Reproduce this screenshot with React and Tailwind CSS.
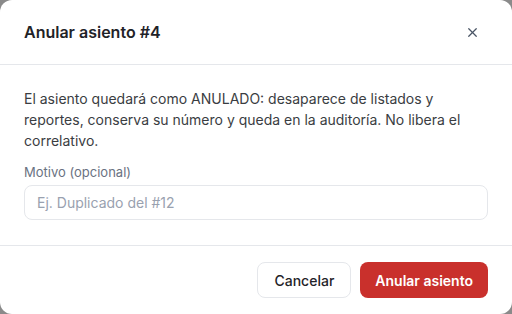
import { X } from "lucide-react";

export default function App() {
  return (
    <div
      className="min-h-[314px] w-full bg-[#8a8a8a]"
      style={{ fontFamily: "Inter, 'Noto Sans', sans-serif" }}
    >
      <div className="flex h-[314px] w-full flex-col rounded-xl bg-white">
        <div className="flex h-[65px] shrink-0 items-center justify-between border-b border-gray-200 px-6">
          <h2 className="text-[16px] font-semibold text-[#1f2328]">
            Anular asiento #4
          </h2>
          <button className="flex h-8 w-8 items-center justify-center text-gray-600">
            <X size={15} strokeWidth={2} />
          </button>
        </div>

        <div className="flex flex-col px-6 pt-[23px] pb-[25px]">
          <p className="text-[14px] leading-[21px] text-[#3a3d42]">
            El asiento quedará como ANULADO: desaparece de listados y
            reportes, conserva su número y queda en la auditoría. No libera el
            correlativo.
          </p>
          <label className="mt-[12px] text-[13px] leading-[18px] text-gray-500">
            Motivo (opcional)
          </label>
          <input
            className="mt-[4px] h-[35px] w-full rounded-lg border border-gray-200 px-3 text-[14px] text-gray-800 outline-none placeholder:text-gray-400"
            placeholder="Ej. Duplicado del #12"
          />
        </div>

        <div className="flex flex-1 items-start justify-end gap-[9px] border-t border-gray-200 px-6 pt-[16px]">
          <button className="h-[36px] rounded-lg border border-gray-200 bg-white px-4 text-[14px] font-medium text-[#1f2328]">
            Cancelar
          </button>
          <button className="h-[36px] rounded-lg bg-[#c9302c] px-[15px] text-[14px] font-semibold text-white">
            Anular asiento
          </button>
        </div>
      </div>
    </div>
  );
}
